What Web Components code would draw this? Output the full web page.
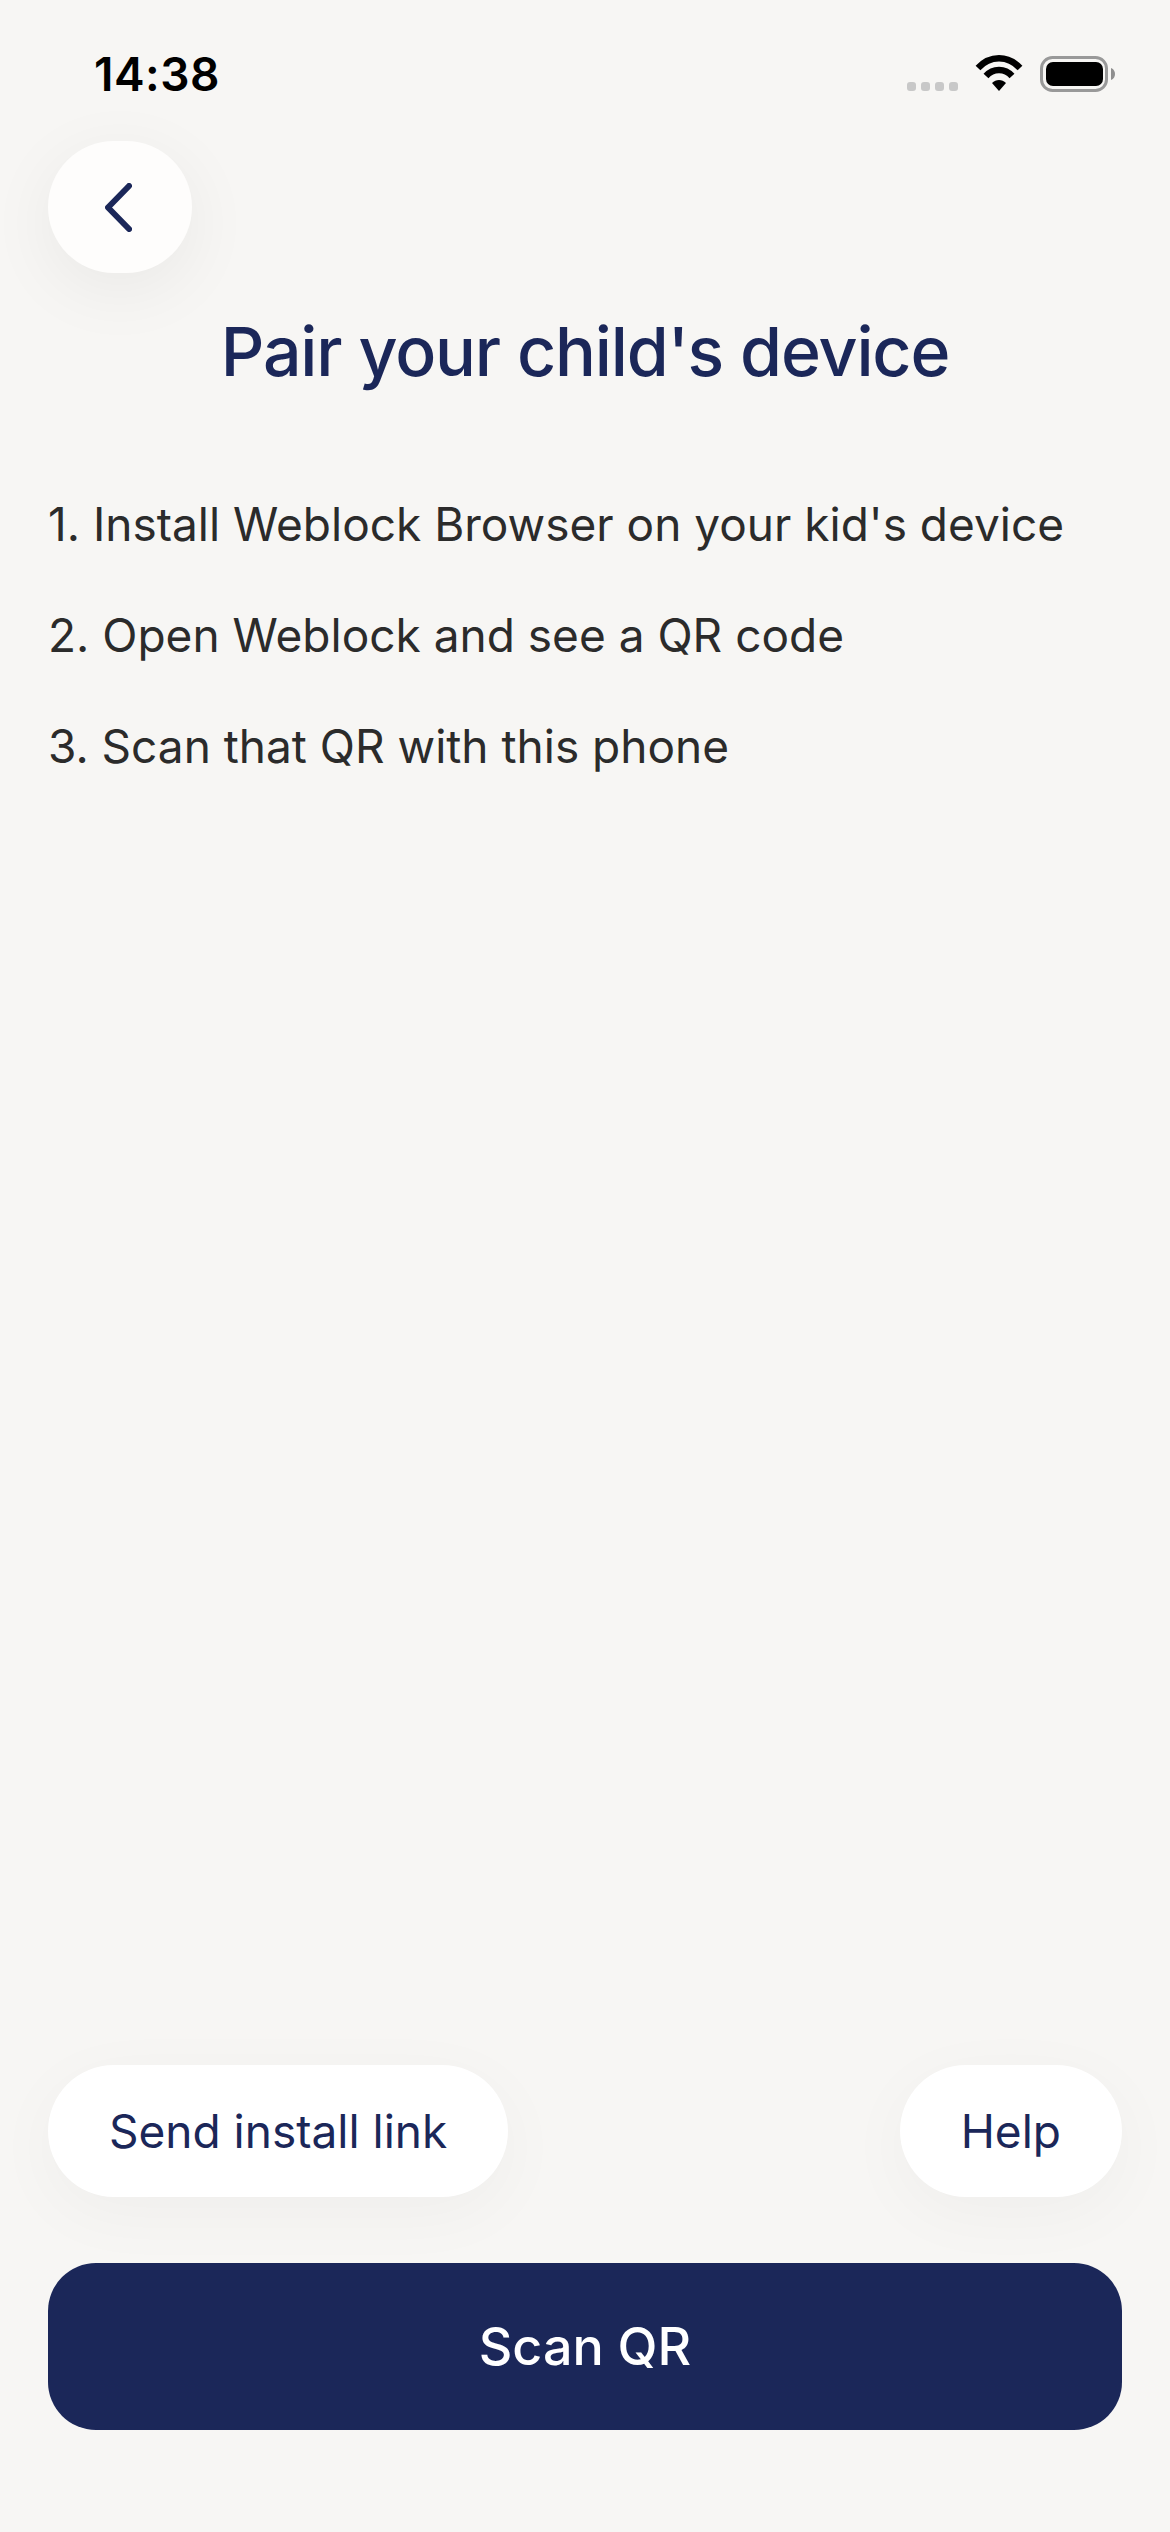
<!DOCTYPE html>
<html><head><meta charset="utf-8"><style>
html,body{margin:0;padding:0;background:#f7f6f4}
body{width:1170px;height:2532px;overflow:hidden;font-family:Inter,sans-serif}
</style></head><body>
<pair-screen></pair-screen>
<script>
function def(name, html){customElements.define(name,class extends HTMLElement{constructor(){super();this.attachShadow({mode:'open'}).innerHTML=html}})}
def('status-bar',`<style>
:host{display:flex;justify-content:space-between;align-items:flex-start;height:141px;box-sizing:border-box;padding:0 48px 0 94px}
.t{font:600 46px/52px Inter,sans-serif;color:#000;margin-top:48px;letter-spacing:.5px}
svg{display:block;margin-top:50px}
</style><div class="t">14:38</div>
<svg width="215" height="46" viewBox="0 0 215 46"><g fill="#c8c8c8"><rect x="0" y="32" width="9" height="9" rx="3"/><rect x="14" y="32" width="9" height="9" rx="3"/><rect x="28" y="32" width="9" height="9" rx="3"/><rect x="42" y="32" width="9" height="9" rx="3"/></g>
<g fill="none" stroke="#000" stroke-width="6.500"><path d="M71 18C83 5 101 5 113 18"/><path d="M79 26C86 18 98 18 105 26"/></g><path d="M85 33C89 29 95 29 99 33L92 41Z" fill="#000"/>
<rect x="134.500" y="7.500" width="65" height="33" rx="11" fill="none" stroke="#999" stroke-width="3"/><rect x="139" y="12" width="57" height="24" rx="7" fill="#000"/><path d="M204 18C207 19 208 22 208 24C208 26 207 29 204 30Z" fill="#8f8f8f"/></svg>`);
def('back-button',`<style>
:host{display:flex;width:144px;height:132px;border-radius:66px;background:#fefdfc;align-items:center;justify-content:center;box-shadow:0 16px 70px rgba(0,0,0,.06);margin-left:48px}
svg{display:block;margin-right:3px}
</style><svg width="27" height="49" viewBox="0 0 27 49"><path d="M24 3L3 24.500L24 46" fill="none" stroke="#1b2759" stroke-width="6" stroke-linecap="round" stroke-linejoin="round"/></svg>`);
def('page-title',`<style>
:host{display:block;text-align:center;font:500 68px/84px Inter,sans-serif;color:#1b2759;margin-top:36px;letter-spacing:-1.15px}
</style><slot></slot>`);
def('step-list',`<style>
:host{display:flex;flex-direction:column;gap:55px;margin:103px 48px 0;font:400 46px/56px Inter,sans-serif;color:#2b2b2b}
</style><slot></slot>`);
def('pill-button',`<style>
:host{display:flex;align-items:center;height:132px;border-radius:66px;background:#fff;padding:0 61px;color:#1b2759;font:400 46px/58px Inter,sans-serif;box-shadow:0 16px 70px rgba(0,0,0,.035)}
</style><slot></slot>`);
def('primary-button',`<style>
:host{display:flex;align-items:center;justify-content:center;height:167px;border-radius:48px;background:#1b2759;color:#fff;font:500 52px/62px Inter,sans-serif}
</style><slot></slot>`);
def('pair-screen',`<style>
:host{display:flex;flex-direction:column;height:2532px;box-sizing:border-box}
.sp{flex:1}
.row{display:flex;justify-content:space-between;margin:0 48px}
.cta{margin:66px 48px 102px}
</style><status-bar></status-bar><back-button></back-button><page-title>Pair your child's device</page-title>
<step-list><div>1. Install Weblock Browser on your kid's device</div><div>2. Open Weblock and see a QR code</div><div>3. Scan that QR with this phone</div></step-list>
<div class="sp"></div><div class="row"><pill-button>Send install link</pill-button><pill-button>Help</pill-button></div>
<div class="cta"><primary-button>Scan QR</primary-button></div>`);
</script></body></html>
